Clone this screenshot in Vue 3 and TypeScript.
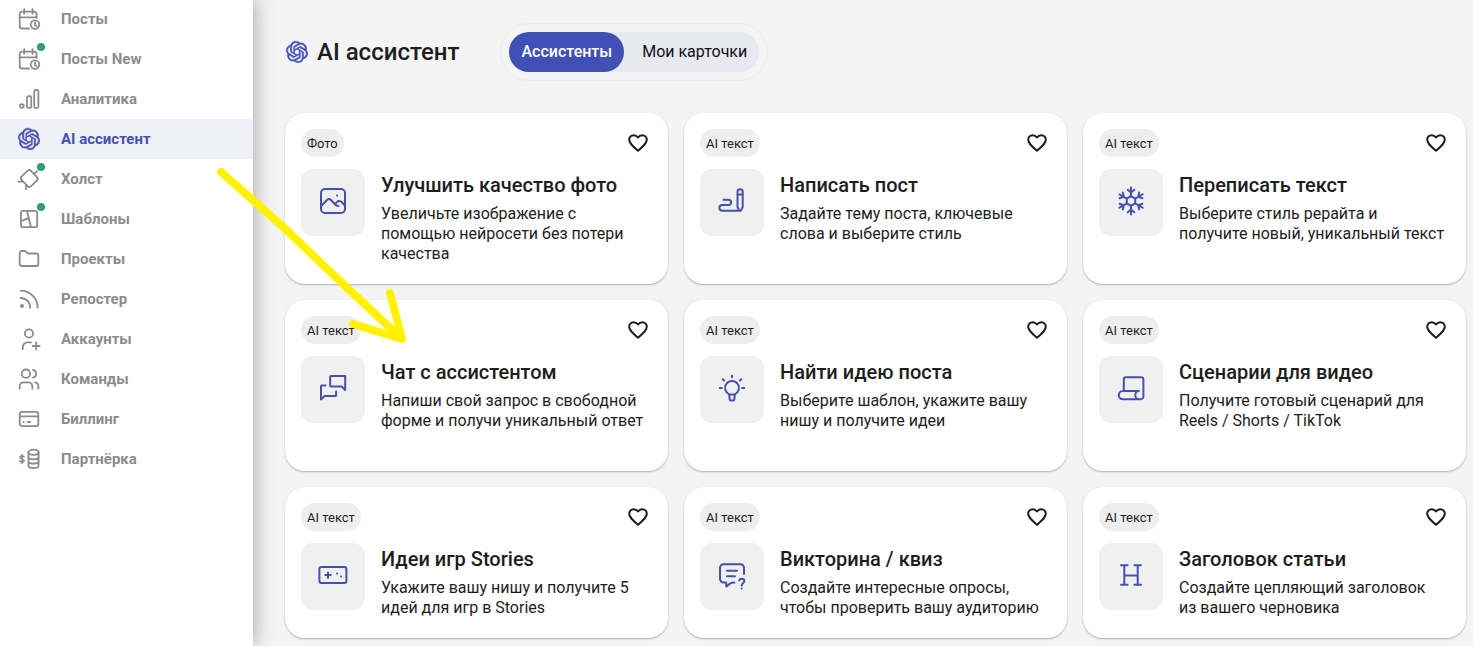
<script setup lang="ts">
import { ref } from 'vue'

interface NavItem {
  label: string
  icon: string
  badge?: boolean
}

interface Card {
  tag: string
  title: string
  text: string
  icon: string
}

const knot =
  'M22.2819 9.8211a5.9847 5.9847 0 0 0-.5157-4.9108 6.0462 6.0462 0 0 0-6.5098-2.9A6.0651 6.0651 0 0 0 4.9807 4.1818a5.9847 5.9847 0 0 0-3.9977 2.9 6.0462 6.0462 0 0 0 .7427 7.0966 5.98 5.98 0 0 0 .511 4.9107 6.051 6.051 0 0 0 6.5146 2.9001A5.9847 5.9847 0 0 0 13.2599 24a6.0557 6.0557 0 0 0 5.7718-4.2058 5.9894 5.9894 0 0 0 3.9977-2.9001 6.0557 6.0557 0 0 0-.7475-7.0729zm-9.022 12.6081a4.4755 4.4755 0 0 1-2.8764-1.0408l.1419-.0804 4.7783-2.7582a.7948.7948 0 0 0 .3927-.6813v-6.7369l2.02 1.1686a.071.071 0 0 1 .038.052v5.5826a4.504 4.504 0 0 1-4.4945 4.4944zm-9.6607-4.1254a4.4708 4.4708 0 0 1-.5346-3.0137l.142.0852 4.783 2.7582a.7712.7712 0 0 0 .7806 0l5.8428-3.3685v2.3324a.0804.0804 0 0 1-.0332.0615L9.74 19.9502a4.4992 4.4992 0 0 1-6.1408-1.6464zM2.3408 7.8956a4.485 4.485 0 0 1 2.3655-1.9728V11.6a.7664.7664 0 0 0 .3879.6765l5.8144 3.3543-2.0201 1.1685a.0757.0757 0 0 1-.071 0l-4.8303-2.7865A4.504 4.504 0 0 1 2.3408 7.872zm16.5963 3.8558L13.1038 8.364 15.1192 7.2a.0757.0757 0 0 1 .071 0l4.8303 2.7913a4.4944 4.4944 0 0 1-.6765 8.1042v-5.6772a.79.79 0 0 0-.407-.667zm2.0107-3.0231l-.142-.0852-4.7735-2.7818a.7759.7759 0 0 0-.7854 0L9.409 9.2297V6.8974a.0662.0662 0 0 1 .0284-.0615l4.8303-2.7866a4.4992 4.4992 0 0 1 6.6802 4.66zM8.3065 12.863l-2.02-1.1638a.0804.0804 0 0 1-.038-.0567V6.0742a4.4992 4.4992 0 0 1 7.3757-3.4537l-.142.0805L8.704 5.459a.7948.7948 0 0 0-.3927.6813zm1.0976-2.3654l2.602-1.4998 2.6069 1.4998v2.9994l-2.5974 1.4997-2.6067-1.4997Z'

const logo = `<path fill="currentColor" stroke="currentColor" stroke-width="0.6" transform="translate(1.2 1.2) scale(0.9)" d="${knot}"/>`

const calendar =
  '<path d="M12 21.5H5a2.3 2.3 0 0 1-2.3-2.3V7A2.3 2.3 0 0 1 5 4.7h12.3A2.3 2.3 0 0 1 19.6 7v4M2.7 10.3h16.9M7.200 2.200v4.600M15.500 2.200v4.600"/><circle cx="18" cy="17.6" r="4.3"/><path d="M18 15.3v2.500l1.500 1.200"/>'

const nav: NavItem[] = [
  { label: 'Посты', icon: calendar },
  { label: 'Посты New', icon: calendar, badge: true },
  {
    label: 'Аналитика',
    icon: '<circle cx="4.9" cy="19" r="1.900"/><rect x="10" y="9.2" width="4.200" height="11.700" rx="1.500"/><rect x="17.200" y="3" width="4.200" height="17.900" rx="1.500"/>',
  },
  { label: 'AI ассистент', icon: logo },
  {
    label: 'Холст',
    icon: '<rect x="5.5" y="5" width="13.6" height="13" rx="2.500" transform="rotate(46 12.300 11.500)"/><path d="M1.300 14.600h4.400M9 22.300v-4.500M20 4.200l-3.200 3"/>',
    badge: true,
  },
  {
    label: 'Шаблоны',
    icon: '<rect x="3.9" y="3.9" width="16.3" height="16.3" rx="2"/><path d="M10 4l4 16.200M3.900 14.200l7.700-3"/>',
    badge: true,
  },
  {
    label: 'Проекты',
    icon: '<path d="M2.700 17V6a2 2 0 0 1 2-2h3a2 2 0 0 1 1.500.7l1 1.100a2 2 0 0 0 1.500.7h7.600a2 2 0 0 1 2 2V17a2 2 0 0 1-2 2H4.700a2 2 0 0 1-2-2z"/>',
  },
  {
    label: 'Репостер',
    icon: '<path d="M3.700 11a9.600 9.600 0 0 1 9.600 9.700M3.700 3.700a17 17 0 0 1 17 17"/><circle cx="5" cy="19" r="1.100" fill="currentColor"/>',
  },
  {
    label: 'Аккаунты',
    icon: '<circle cx="12" cy="6.5" r="4.100"/><path d="M5.800 22v-2a4.600 4.600 0 0 1 4.600-4.600H14M19.200 15.500v7M15.700 19h7"/>',
  },
  {
    label: 'Команды',
    icon: '<circle cx="8.9" cy="6.7" r="4.200"/><path d="M16 2.800a4 4 0 0 1 0 7.800M2.700 21.700v-2.400a4 4 0 0 1 4-4h4.600a4 4 0 0 1 4 4v2.400M18 15.400a4 4 0 0 1 3.400 4v2.300"/>',
  },
  {
    label: 'Биллинг',
    icon: '<rect x="2.7" y="4.9" width="18.6" height="14.3" rx="2.500"/><path d="M2.700 9.300h18.600M6.600 15h.1M10.700 15h2.600"/>',
  },
  {
    label: 'Партнёрка',
    icon: '<ellipse cx="16.5" cy="5.3" rx="5.100" ry="2.600"/><path d="M11.400 5.300v13.200c0 3.500 10.200 3.500 10.200 0V5.300M11.400 9.700c0 3.500 10.200 3.500 10.200 0M11.400 14.100c0 3.500 10.200 3.500 10.200 0"/><path d="M7 10c-.5-.8-1.200-1-2-1-1.200 0-2 .6-2 1.500 0 2.100 4.100 1 4.100 3.100 0 .9-.9 1.500-2.100 1.500-.9 0-1.700-.3-2.200-1.100M5 7.600v8.900" stroke-width="1.500"/>',
  },
]

const snowArm = 'M16 11.200V2.500M12.700 4.700 16 7.600l3.300-2.900'
const snow =
  [0, 60, 120, 180, 240, 300].map((a) => `<path d="${snowArm}" transform="rotate(${a} 16 16)"/>`).join('') +
  '<path d="M16 11.200l4.200 2.400v4.800L16 20.800l-4.200-2.400v-4.800z"/>'

const cards: Card[] = [
  {
    tag: 'Фото',
    title: 'Улучшить качество фото',
    text: 'Увеличьте изображение с помощью нейросети без потери качества',
    icon: '<rect x="4" y="4" width="24" height="24" rx="4"/><path d="M4 21.200l6-6.200c1.300-1.300 2.600-1.300 4 0l3.700 4c1.300 1.600 2.500 2 3.800 2.100M18.200 19.300c.4-1.300 2.200-3.300 4.200-3.300 2.300 0 2.600 1.700 5.600 4.700"/><path d="M20 10.400h.1"/>',
  },
  {
    tag: 'AI текст',
    title: 'Написать пост',
    text: 'Задайте тему поста, ключевые слова и выберите стиль',
    icon: '<path d="M21.500 22V6.800a2.600 2.600 0 0 1 5.200 0V22l-1.500 3.200a1.200 1.200 0 0 1-2.200 0zM21.500 9.400h5.200M7.500 14.700h5a2.600 2.600 0 0 1 0 5.200H6.300a2.900 2.900 0 0 0 0 5.800H24"/>',
  },
  {
    tag: 'AI текст',
    title: 'Переписать текст',
    text: 'Выберите стиль рерайта и получите новый, уникальный текст',
    icon: snow,
  },
  {
    tag: 'AI текст',
    title: 'Чат с ассистентом',
    text: 'Напиши свой запрос в свободной форме и получи уникальный ответ',
    icon: '<path d="M14 4h14.200v14l-3.300-3.400H14a.8.8 0 0 1-.8-.8v-9A.8.8 0 0 1 14 4zM8.500 13.400H4.800a.8.8 0 0 0-.8.8v13.300L7.600 24h10.700a.8.8 0 0 0 .8-.8v-3.700"/>',
  },
  {
    tag: 'AI текст',
    title: 'Найти идею поста',
    text: 'Выберите шаблон, укажите вашу нишу и получите идеи',
    icon: '<path d="M13.200 22.300a7 7 0 1 1 5.600 0M13.200 22.600l.5 5a1 1 0 0 0 1 .9h2.600a1 1 0 0 0 1-.9l.5-5zM16 3.700v1.500M6.800 7.300l1.200 1.200M25.200 7.300 24 8.500M3.800 16h2M26.200 16h2"/>',
  },
  {
    tag: 'AI текст',
    title: 'Сценарии для видео',
    text: 'Получите готовый сценарий для Reels / Shorts / TikTok',
    icon: '<path d="M8.800 18.900V7.500a2.300 2.300 0 0 1 2.300-2.300h15a2.300 2.300 0 0 1 2.300 2.300v17a2.700 2.700 0 0 1-2.700 2.700H7.900a4.100 4.100 0 0 1 0-8.300h16M23.900 18.900c-1.900 0-3.600 1.900-3.600 4.100s1.700 4.200 3.600 4.200"/>',
  },
  {
    tag: 'AI текст',
    title: 'Идеи игр Stories',
    text: 'Укажите вашу нишу и получите 5 идей для игр в Stories',
    icon: '<rect x="2.4" y="7.9" width="27" height="16.2" rx="2"/><path d="M11 13.400v5.400M8.300 16.100h5.400M20 14.600h.1M24 17.600h.1"/>',
  },
  {
    tag: 'AI текст',
    title: 'Викторина / квиз',
    text: 'Создайте интересные опросы, чтобы проверить вашу аудиторию',
    icon: '<path d="M28 15V8.800A3.600 3.600 0 0 0 24.400 5.200H7.600A3.600 3.600 0 0 0 4 8.800v11a3.800 3.800 0 0 0 3.800 3.800h2.400v4l4.300-3.300q1-.7 3.900-.7M11 11.700h10M11 17.200h8"/><path d="M23.200 21.500c.4-1.200 1.200-1.700 2.500-1.700 1.600 0 2.600 1 2.600 2.300 0 2.200-2.600 2-2.600 4.300M25.700 29.400v.1"/>',
  },
  {
    tag: 'AI текст',
    title: 'Заголовок статьи',
    text: 'Создайте цепляющий заголовок из\u00a0вашего черновика',
    icon: '<path d="M9.300 6.200v19.600M22.700 6.200v19.600M9.300 16.500h13.400M6 6.200h6.600M19.400 6.200H26M6 25.800h6.600M19.400 25.800H26"/>',
  },
]

const activeNav = ref('AI ассистент')
const tabs = ['Ассистенты', 'Мои карточки']
const activeTab = ref(tabs[0])
const liked = ref<string[]>([])

function toggleLike(title: string) {
  liked.value = liked.value.includes(title)
    ? liked.value.filter((t) => t !== title)
    : [...liked.value, title]
}
</script>

<template>
  <div class="page">
    <nav class="sidebar">
      <a
        v-for="item in nav"
        :key="item.label"
        href="#"
        class="nav-item"
        :class="{ active: item.label === activeNav }"
        @click.prevent="activeNav = item.label"
      >
        <span class="nav-icon">
          <svg class="line-icon" viewBox="0 0 24 24" width="24" height="24" aria-hidden="true" v-html="item.icon" />
          <span v-if="item.badge" class="dot" />
        </span>
        <span>{{ item.label }}</span>
      </a>
    </nav>

    <main class="main">
      <header class="head">
        <h1 class="title">
          <svg class="title-icon" viewBox="0 0 24 24" width="24" height="24" aria-hidden="true" v-html="logo" />
          AI ассистент
        </h1>
        <div class="tabs-frame">
          <div class="tabs" role="tablist">
            <button
              v-for="tab in tabs"
              :key="tab"
              type="button"
              role="tab"
              class="tab"
              :class="{ selected: tab === activeTab }"
              :aria-selected="tab === activeTab"
              @click="activeTab = tab"
            >
              {{ tab }}
            </button>
          </div>
        </div>
      </header>

      <section class="grid">
        <article v-for="card in cards" :key="card.title" class="card">
          <div class="card-top">
            <span class="tag">{{ card.tag }}</span>
            <button
              type="button"
              class="like"
              :class="{ on: liked.includes(card.title) }"
              aria-label="В избранное"
              @click="toggleLike(card.title)"
            >
              <svg viewBox="0 0 24 24" width="24" height="24" aria-hidden="true">
                <path
                  d="M12 19.700C6 14.700 3.200 12.200 3.200 8.800c0-2.600 2-4.600 4.500-4.600 1.700 0 3.300.9 4.300 2.300 1-1.400 2.600-2.300 4.300-2.300 2.500 0 4.500 2 4.500 4.600 0 3.400-2.800 5.900-8.800 10.900z"
                />
              </svg>
            </button>
          </div>
          <div class="card-body">
            <span class="card-icon">
              <svg class="line-icon" viewBox="0 0 32 32" width="32" height="32" aria-hidden="true" v-html="card.icon" />
            </span>
            <div class="card-text">
              <h2>{{ card.title }}</h2>
              <p>{{ card.text }}</p>
            </div>
          </div>
        </article>
      </section>
    </main>

    <svg class="arrow" viewBox="0 0 200 184" width="200" height="184" aria-hidden="true">
      <path d="M9 11 68 63 130 122 190 178M178 132 190 178 141 163" />
    </svg>
  </div>
</template>

<style>
body {
  margin: 0;
  background: #f4f4f4;
}
</style>

<style scoped>
.page {
  position: relative;
  display: flex;
  min-height: 100vh;
  overflow: hidden;
  font-family: Roboto, 'Liberation Sans', sans-serif;
  color: #1d1d1d;
  background: #f4f4f4;
}

.sidebar {
  flex: 0 0 253px;
  margin-top: -1px;
  background: #fff;
  box-shadow: 0 0 20px rgba(0, 0, 0, 0.35);
}

.nav-item {
  display: flex;
  align-items: center;
  gap: 20px;
  height: 40px;
  padding-left: 17px;
  font-size: 15px;
  font-weight: 700;
  color: #8c8c8c;
  text-decoration: none;
}

.nav-item.active {
  color: #4650ad;
  background: #f0f0f8;
}

.nav-icon {
  position: relative;
  display: flex;
}

.line-icon {
  fill: none;
  stroke: currentColor;
  stroke-width: 1.8;
  stroke-linecap: round;
  stroke-linejoin: round;
}

.dot {
  position: absolute;
  top: -4px;
  right: -4px;
  width: 8px;
  height: 8px;
  border-radius: 50%;
  background: #2f9e74;
}

.main {
  flex: 1;
  min-width: 0;
  padding: 23px 7px 8px 32px;
}

.head {
  display: flex;
  align-items: center;
  gap: 41px;
  margin-bottom: 32px;
}

.title {
  display: flex;
  align-items: center;
  gap: 8px;
  margin: 0;
  font-size: 24px;
  line-height: 32px;
  font-weight: 500;
}

.title-icon {
  color: #3f51b5;
}

.tabs-frame {
  padding: 8px;
  border: 1px solid #ebebee;
  border-radius: 29px;
}

.tabs {
  display: flex;
  gap: 6px;
  height: 40px;
  border-radius: 20px;
  background: #e8e8f0;
}

.tab {
  padding: 0 12px 2px;
  border: 0;
  border-radius: 20px;
  font: inherit;
  font-size: 16px;
  color: #111;
  background: none;
  cursor: pointer;
}

.tab.selected {
  font-weight: 500;
  color: #fff;
  background: #3f51b5;
}

.grid {
  display: grid;
  grid-template-columns: repeat(3, minmax(0, 1fr));
  grid-template-rows: repeat(2, minmax(171px, auto));
  gap: 16px;
}

.card {
  box-sizing: border-box;
  padding: 16px 16px 20px;
  border-radius: 20px;
  background: #fff;
  box-shadow:
    0 1px 1px rgba(0, 0, 0, 0.16),
    0 1px 3px rgba(0, 0, 0, 0.14);
}

.card-top {
  display: flex;
  align-items: center;
  justify-content: space-between;
  height: 28px;
  padding-right: 2px;
  margin-bottom: 12px;
}

.tag {
  padding: 2px 6px 0;
  border-radius: 14px;
  font-size: 13px;
  line-height: 26px;
  background: #eeeeee;
}

.like {
  display: flex;
  padding: 0;
  border: 0;
  background: none;
  cursor: pointer;
}

.like svg {
  fill: none;
  stroke: #1d1d1d;
  stroke-width: 2;
  stroke-linejoin: round;
}

.like.on svg {
  fill: #1d1d1d;
}

.card-body {
  display: flex;
  align-items: flex-start;
  gap: 16px;
}

.card-icon {
  flex: none;
  display: flex;
  padding: 16px 16px 19px;
  border-radius: 12px;
  color: #4650ad;
  background: #f0f0f0;
}

.card-icon .line-icon {
  stroke-width: 2;
}

.card-text h2 {
  margin: 0 0 3px;
  font-size: 20px;
  line-height: 32px;
  font-weight: 500;
}

.card-text p {
  margin: 0;
  font-size: 16px;
  line-height: 20px;
}

.arrow {
  position: absolute;
  left: 212px;
  top: 161px;
  fill: none;
  stroke: #fff200;
  stroke-width: 8;
  stroke-linecap: round;
  stroke-linejoin: round;
  pointer-events: none;
}
</style>
